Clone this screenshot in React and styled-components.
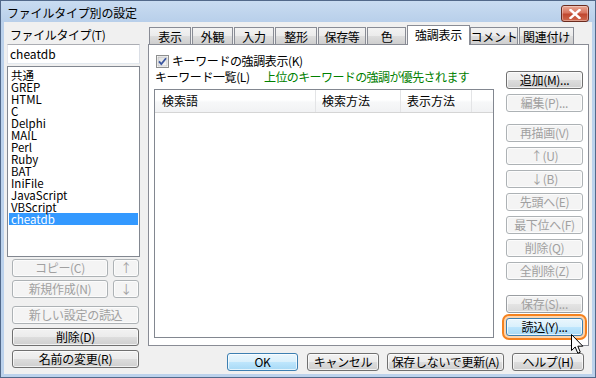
import React from "react";
import styled, { createGlobalStyle, css } from "styled-components";

const GlobalStyle = createGlobalStyle`
  html, body {
    margin: 0;
    padding: 0;
    background: #ffffff;
  }
  body {
    font-family: "Noto Sans CJK JP", "Noto Sans", sans-serif;
    font-size: 12px;
    color: #000;
  }
  * {
    box-sizing: border-box;
  }
`;

const Window = styled.div`
  position: relative;
  width: 596px;
  height: 378px;
  border: 1px solid #52698a;
  background: #bcd2ec;
  display: flex;
  flex-direction: column;
  overflow: hidden;
`;

const TitleBar = styled.div`
  height: 21px;
  flex: none;
  display: flex;
  align-items: center;
  padding: 3px 6px 0 6px;
  background: linear-gradient(#c9dcf1, #b8cfea);
`;

const Title = styled.span`
  line-height: 16px;
  letter-spacing: -0.2px;
`;

const CloseButton = styled.div`
  margin-left: auto;
  width: 28px;
  height: 17px;
  align-self: flex-start;
  margin-top: 1px;
  border: 1px solid #6b2b1f;
  border-radius: 3px;
  background: linear-gradient(#e9a898 0%, #d8755f 45%, #c0472f 55%, #cf6a4f 100%);
  display: flex;
  align-items: center;
  justify-content: center;
  box-shadow: inset 0 0 0 1px rgba(255, 255, 255, 0.35);
`;

const Client = styled.div`
  flex: 1;
  margin: 0 3px 3px 3px;
  background: #f0f0f0;
  display: flex;
`;

const LeftColumn = styled.div`
  width: 144px;
  flex: none;
  padding-left: 3px;
  display: flex;
  flex-direction: column;
`;

const FieldLabel = styled.div`
  margin-top: 5px;
  height: 16px;
  line-height: 16px;
  padding-left: 3px;
  letter-spacing: -0.4px;
`;

const TextInput = styled.div`
  margin-top: 1px;
  width: 133px;
  height: 20px;
  border: 1px solid;
  border-color: #abadb3 #dbdfe6 #e3e9ef #e2e3ea;
  background: #fff;
  padding-left: 2px;
  line-height: 18px;
`;

const ListBox = styled.div`
  margin-top: 2px;
  width: 133px;
  height: 191px;
  border: 1px solid #828790;
  background: #fff;
  padding: 2px 1px 0 1px;
`;

const ListItem = styled.div`
  height: 12px;
  line-height: 12px;
  font-size: 11.5px;
  padding-left: 2px;
  white-space: nowrap;
  background: ${(p) => (p.$selected ? "#3399ff" : "transparent")};
  color: ${(p) => (p.$selected ? "#fff" : "#000")};
`;

const ButtonRow = styled.div`
  display: flex;
  gap: 5px;
  padding-left: 5px;
  margin-top: ${(p) => p.$top || 0}px;
`;

const buttonVariants = {
  normal: css`
    border-color: #707070;
    background: linear-gradient(#f2f2f2 0%, #ebebeb 50%, #dddddd 51%, #cfcfcf 100%);
    color: #000;
  `,
  hot: css`
    border-color: #3c7fb1;
    background: linear-gradient(#eaf6fd 0%, #d9f0fc 50%, #bee6fd 51%, #a7d9f5 100%);
    color: #000;
  `,
  disabled: css`
    border-color: #adb2b5;
    background: #f4f4f4;
    color: #a0a0a0;
  `,
  fade: css`
    border-color: #9a9ea2;
    background: linear-gradient(#f4f4f4 0%, #f0f0f0 50%, #e4e4e4 51%, #d9d9d9 100%);
    color: #a0a0a0;
  `,
};

const Button = styled.div`
  position: relative;
  width: ${(p) => p.$width}px;
  height: 18px;
  flex: none;
  border: 1px solid;
  border-radius: 3px;
  display: flex;
  align-items: center;
  justify-content: center;
  line-height: 14px;
  white-space: nowrap;
  letter-spacing: -0.3px;
  margin-top: ${(p) => p.$top || 0}px;
  margin-right: ${(p) => p.$right || 0}px;
  box-shadow: inset 0 0 0 1px rgba(255, 255, 255, 0.7);
  ${(p) => buttonVariants[p.$variant || "normal"]}
  ${(p) =>
    p.$focus &&
    css`
      box-shadow: inset 0 0 0 1px rgba(255, 255, 255, 0.7), 0 0 0 2px #fdd5ae, 0 0 0 4px #f5821f;
    `}
`;

const RightColumn = styled.div`
  flex: 1;
  padding-right: 3px;
  display: flex;
  flex-direction: column;
`;

const TabStrip = styled.div`
  margin-top: 3px;
  height: 19px;
  padding-left: 1px;
  display: flex;
  align-items: flex-end;
  gap: 1px;
`;

const Tab = styled.div`
  width: ${(p) => p.$width}px;
  height: ${(p) => (p.$active ? 20 : 17)}px;
  margin-bottom: ${(p) => (p.$active ? -1 : 0)}px;
  margin-right: ${(p) => (p.$active ? -1 : 0)}px;
  position: relative;
  z-index: ${(p) => (p.$active ? 2 : 0)};
  border: 1px solid #898c95;
  border-bottom: none;
  background: ${(p) =>
    p.$active ? "#ffffff" : "linear-gradient(#f3f3f3 0%, #ebebeb 50%, #dddddd 51%, #cfcfcf 100%)"};
  display: flex;
  align-items: ${(p) => (p.$active ? "flex-start" : "center")};
  padding-top: ${(p) => (p.$active ? 1 : 0)}px;
  justify-content: center;
  line-height: 15px;
  white-space: nowrap;
  letter-spacing: -0.3px;
`;

const Panel = styled.div`
  position: relative;
  z-index: 1;
  height: 302px;
  border: 1px solid #898c95;
  background: #fff;
  display: flex;
  padding: 8px 5px 7px 5px;
`;

const PanelMain = styled.div`
  width: 340px;
  display: flex;
  flex-direction: column;
`;

const CheckRow = styled.div`
  height: 16px;
  display: flex;
  align-items: center;
  gap: 3px;
  padding-left: 2px;
  line-height: 16px;
  letter-spacing: -0.4px;
`;

const ListLabelRow = styled.div`
  height: 16px;
  display: flex;
  align-items: center;
  padding-left: 1px;
  line-height: 16px;
  white-space: nowrap;
  letter-spacing: -0.4px;
`;

const ListLabel = styled.span`
  width: 109px;
  flex: none;
`;

const Hint = styled.span`
  color: #008000;
  letter-spacing: -0.6px;
`;

const ListView = styled.div`
  margin-top: 4px;
  height: 249px;
  border: 1px solid #828790;
  background: #fff;
`;

const HeaderRow = styled.div`
  height: 23px;
  display: flex;
  border-bottom: 1px solid #d5d5d5;
  background: linear-gradient(#ffffff 0%, #ffffff 45%, #f7f8f9 55%, #f1f2f4 100%);
`;

const HeaderCell = styled.div`
  width: ${(p) => p.$width}px;
  flex: none;
  border-right: 1px solid #e3e4e6;
  padding-left: ${(p) => p.$pad}px;
  line-height: 22px;
  white-space: nowrap;
`;

const ButtonColumn = styled.div`
  margin-left: 12px;
  margin-top: 18px;
  width: 77px;
  display: flex;
  flex-direction: column;
  gap: 5px;
`;

const BottomBar = styled.div`
  margin-top: 7px;
  display: flex;
  justify-content: flex-end;
  gap: 8px;
  padding-right: 5px;
`;

const Cursor = styled.svg`
  position: absolute;
  left: 570px;
  top: 333px;
  z-index: 5;
`;

const CheckBox = () => (
  <svg width="13" height="13" viewBox="0 0 13 13">
    <defs>
      <linearGradient id="cbg" x1="0" y1="0" x2="1" y2="1">
        <stop offset="0" stopColor="#dcdcdc" />
        <stop offset="1" stopColor="#f8f8f8" />
      </linearGradient>
    </defs>
    <rect x="0.5" y="0.5" width="12" height="12" fill="#fff" stroke="#8e8f8f" />
    <rect x="2" y="2" width="9" height="9" fill="url(#cbg)" stroke="#b0b0b0" strokeWidth="0.6" />
    <path d="M3 6.3 L5.3 9 L10 3.2" fill="none" stroke="#3b57a0" strokeWidth="1.8" />
  </svg>
);

const fileTypes = [
  "共通",
  "GREP",
  "HTML",
  "C",
  "Delphi",
  "MAIL",
  "Perl",
  "Ruby",
  "BAT",
  "IniFile",
  "JavaScript",
  "VBScript",
  "cheatdb",
];

const tabs = [
  { label: "表示", width: 42 },
  { label: "外観", width: 41 },
  { label: "入力", width: 40 },
  { label: "整形", width: 42 },
  { label: "保存等", width: 48 },
  { label: "色", width: 39 },
  { label: "強調表示", width: 63, active: true },
  { label: "コメント", width: 48 },
  { label: "関連付け", width: 55 },
];

const sideButtons = [
  { label: "追加(M)...", variant: "normal" },
  { label: "編集(P)...", variant: "disabled" },
  { label: "再描画(V)", variant: "disabled", top: 7 },
  { label: "↑(U)", variant: "disabled" },
  { label: "↓(B)", variant: "disabled" },
  { label: "先頭へ(E)", variant: "disabled" },
  { label: "最下位へ(F)", variant: "disabled" },
  { label: "削除(Q)", variant: "disabled" },
  { label: "全削除(Z)", variant: "disabled" },
  { label: "保存(S)...", variant: "fade", top: 10 },
  { label: "読込(Y)...", variant: "hot", focus: true },
];

export default function App() {
  return (
    <>
      <GlobalStyle />
      <Window>
        <TitleBar>
          <Title>ファイルタイプ別の設定</Title>
          <CloseButton>
            <svg width="12" height="10" viewBox="0 0 12 10">
              <path d="M1.5 1 L10.5 9 M10.5 1 L1.5 9" stroke="#fff" strokeWidth="2.4" strokeLinecap="square" />
            </svg>
          </CloseButton>
        </TitleBar>
        <Client>
          <LeftColumn>
            <FieldLabel>ファイルタイプ(T)</FieldLabel>
            <TextInput>cheatdb</TextInput>
            <ListBox>
              {fileTypes.map((t) => (
                <ListItem key={t} $selected={t === "cheatdb"}>
                  {t}
                </ListItem>
              ))}
            </ListBox>
            <ButtonRow $top={2}>
              <Button $width={96} $variant="disabled">コピー(C)</Button>
              <Button $width={26} $variant="disabled">↑</Button>
            </ButtonRow>
            <ButtonRow $top={3}>
              <Button $width={96} $variant="disabled">新規作成(N)</Button>
              <Button $width={26} $variant="disabled">↓</Button>
            </ButtonRow>
            <ButtonRow $top={8}>
              <Button $width={127} $variant="disabled">新しい設定の読込</Button>
            </ButtonRow>
            <ButtonRow $top={4}>
              <Button $width={127}>削除(D)</Button>
            </ButtonRow>
            <ButtonRow $top={4}>
              <Button $width={127}>名前の変更(R)</Button>
            </ButtonRow>
          </LeftColumn>
          <RightColumn>
            <TabStrip>
              {tabs.map((t) => (
                <Tab key={t.label} $width={t.width} $active={t.active}>
                  {t.label}
                </Tab>
              ))}
            </TabStrip>
            <Panel>
              <PanelMain>
                <CheckRow>
                  <CheckBox />
                  <span>キーワードの強調表示(K)</span>
                </CheckRow>
                <ListLabelRow>
                  <ListLabel>キーワード一覧(L)</ListLabel>
                  <Hint>上位のキーワードの強調が優先されます</Hint>
                </ListLabelRow>
                <ListView>
                  <HeaderRow>
                    <HeaderCell $width={161} $pad={7}>検索語</HeaderCell>
                    <HeaderCell $width={85} $pad={6}>検索方法</HeaderCell>
                    <HeaderCell $width={71} $pad={6}>表示方法</HeaderCell>
                  </HeaderRow>
                </ListView>
              </PanelMain>
              <ButtonColumn>
                {sideButtons.map((b) => (
                  <Button
                    key={b.label}
                    $width={77}
                    $variant={b.variant}
                    $top={b.top}
                    $focus={b.focus}
                  >
                    {b.label}
                  </Button>
                ))}
              </ButtonColumn>
            </Panel>
            <BottomBar>
              <Button $width={71} $variant="hot" $right={1}>OK</Button>
              <Button $width={72}>キャンセル</Button>
              <Button $width={117}>保存しないで更新(A)</Button>
              <Button $width={72}>ヘルプ(H)</Button>
            </BottomBar>
          </RightColumn>
        </Client>
        <Cursor width="13" height="21" viewBox="0 0 13 21">
          <path
            d="M0.5 0.5 L0.5 16.5 L4.2 13 L6.8 19.2 L9.3 18.2 L6.8 12.2 L11.8 12.2 Z"
            fill="#fff"
            stroke="#000"
            strokeWidth="1"
            strokeLinejoin="miter"
          />
        </Cursor>
      </Window>
    </>
  );
}
